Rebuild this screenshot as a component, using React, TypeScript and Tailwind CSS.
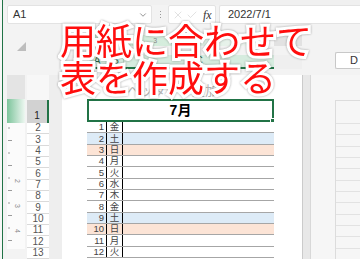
import { Check, ChevronDown, X } from 'lucide-react';

const days: [string, string, string][] = [
    ['1', '金', ''],
    ['2', '土', 'blue'],
    ['3', '日', 'orange'],
    ['4', '月', ''],
    ['5', '火', ''],
    ['6', '水', ''],
    ['7', '木', ''],
    ['8', '金', ''],
    ['9', '土', 'blue'],
    ['10', '日', 'orange'],
    ['11', '月', ''],
    ['12', '火', ''],
];

const rowBg: Record<string, string> = {
    blue: 'bg-[#ddebf7]',
    orange: 'bg-[#fce4d6]',
    '': 'bg-white',
};

function VerticalRuler() {
    // cm ticks down the left side of the page
    const marks = Array.from({ length: 12 }, (_, i) => i);
    return (
        <svg width="18" height="174" className="block">
            <rect x="0" y="0" width="18" height="24" fill="#e4e4e4" />
            <defs>
                <linearGradient id="rowSel" x1="0" x2="1" y1="0" y2="0">
                    <stop offset="0" stopColor="#7cc49b" />
                    <stop offset="1" stopColor="#eef7f1" />
                </linearGradient>
            </defs>
            <rect x="0" y="24" width="18" height="24" fill="url(#rowSel)" />
            <rect x="0" y="48" width="18" height="126" fill="#fbfbfb" />
            {marks.map((i) => (
                <line key={i} x1="1" x2={i % 2 ? 5 : 3} y1={53 + i * 12.5} y2={53 + i * 12.5} stroke="#9a9a9a" strokeWidth="1" />
            ))}
            {[2, 3, 4].map((n, i) => (
                <text key={n} x="8" y={104 + i * 25} fontSize="7" fill="#8a8a8a" fontFamily="Liberation Sans" transform={`rotate(90 8 ${104 + i * 25})`}>
                    {n}
                </text>
            ))}
        </svg>
    );
}

export default function App() {
    return (
        <div className="relative h-[259px] w-[360px] overflow-hidden bg-[#f3f3f3] font-['Liberation_Sans','Noto_Sans_CJK_JP',sans-serif] text-[#333]">
            <div className="flex h-full">
                <div className="w-[2px] bg-[#f7f7f7]" />
                <div className="w-px bg-[#217346]" />

                <div className="flex min-w-0 flex-1 flex-col">
                    {/* ribbon edge */}
                    <div className="h-[6px] bg-[#f0f0f0]" />

                    {/* formula bar */}
                    <div className="flex h-[19px] items-stretch">
                        <div className="ml-[4px] flex w-[145px] items-center justify-between rounded-[2px] border border-[#e3e3e3] bg-white pl-[5px] pr-[3px]">
                            <span className="text-[11px]">A1</span>
                            <ChevronDown size={10} strokeWidth={1.5} className="text-[#555]" />
                        </div>
                        <div className="flex w-[16px] flex-col items-center justify-center gap-[2px]">
                            <span className="h-[1px] w-[1px] bg-[#9a9a9a]" />
                            <span className="h-[1px] w-[1px] bg-[#9a9a9a]" />
                            <span className="h-[1px] w-[1px] bg-[#9a9a9a]" />
                        </div>
                        <div className="flex w-[48px] items-center gap-[2px] rounded-[2px] border border-[#e3e3e3] bg-white pl-[3px]">
                            <X size={12} strokeWidth={1} className="text-[#c4c4c4]" />
                            <Check size={12} strokeWidth={1} className="text-[#c4c4c4]" />
                            <span className="ml-[3px] font-['Liberation_Serif',serif] text-[12px] italic text-[#333]">fx</span>
                        </div>
                        <div className="ml-[3px] flex flex-1 items-center rounded-l-[2px] border border-r-0 border-[#e3e3e3] bg-white pl-[8px] text-[11px]">
                            2022/7/1
                        </div>
                    </div>

                    {/* rulers and column headers */}
                    <div className="flex h-[60px]">
                        <div className="w-[59px] pl-[14px] pt-[18px]">
                            <div className="h-0 w-0 border-b-[9px] border-l-[9px] border-b-[#bdbdbd] border-l-transparent" />
                        </div>
                        <div className="flex w-[240px] flex-col pt-[11px]">
                            <div className="flex h-[11px] bg-[#e2e2e2]">
                                <div className="w-[25px]" />
                                <div className="flex w-[187px] bg-gradient-to-r from-[#c9e7d4] via-[#d8eedf] to-[#f6f6f6] pl-[46px] text-[7px] leading-[11px] text-[#8a8a8a]">
                                    {['2', '3', '4', '5', '6', '7', '8'].map((n) => (
                                        <span key={n} className="w-[25.5px]">{n}</span>
                                    ))}
                                </div>
                            </div>
                            <div className="mt-[9px] flex h-[14px] bg-[#efefef]">
                                <div className="w-[25px]" />
                                <div className="flex w-[187px] border-b-2 border-[#217346] bg-[#d6ecdf] text-[10px] leading-[12px] text-[#2a5e3f]">
                                    <span className="w-[20px] text-center">A</span>
                                    <span className="w-[16px] border-l border-[#b5cfbf] text-center">B</span>
                                    <span className="flex-1 border-l border-[#b5cfbf] text-center">C</span>
                                </div>
                            </div>
                        </div>
                        <div className="flex-1 pl-[33px] pt-[28px]">
                            <div className="flex h-[17px] items-center rounded-l-[2px] border border-r-0 border-[#c8c8c8] bg-white pl-[14px] text-[11px]">
                                D
                            </div>
                        </div>
                    </div>

                    {/* sheet body */}
                    <div className="flex flex-1">
                        <div className="w-[4px]" />
                        <VerticalRuler />
                        <div className="w-[2px]" />

                        {/* row headers */}
                        <div className="flex w-[22px] flex-col bg-[#f7f7f7]">
                            <div className="h-[25px]" />
                            <div className="flex h-[23px] items-end justify-center border-r-2 border-[#217346] bg-[#d2d2d2] pb-[2px] text-[10px] leading-none text-[#222]">
                                1
                            </div>
                            {days.map(([d]) => (
                                <div key={d} className="flex h-[11.34px] shrink-0 items-center justify-center border-b border-[#dadada] bg-white text-[10px] leading-none text-[#555]">
                                    {Number(d) + 1}
                                </div>
                            ))}
                        </div>

                        <div className="w-[13px] bg-[#eeeeee]" />

                        {/* page */}
                        <div className="flex w-[240px] flex-col bg-white pl-[25px]">
                            <div className="h-[24px] pl-[40px] pt-[9px] text-[13px] leading-none text-[#b3b3b3]">
                                ヘッダーの追加
                            </div>
                            <div className="relative flex h-[23px] w-[187px] items-center justify-center border-2 border-[#217346] text-[14px] font-bold text-black">
                                7月
                                <span className="absolute -bottom-[3px] -right-[3px] h-[5px] w-[5px] border border-white bg-[#217346]" />
                            </div>
                            {days.map(([d, w, c]) => (
                                <div key={d} className={`flex h-[11.34px] w-[187px] shrink-0 border-b border-[#a6a6a6] text-[9.5px] leading-none text-[#444] ${rowBg[c]}`}>
                                    <span className="flex w-[19px] items-center justify-end pr-[2px]">{d}</span>
                                    <span className="flex w-[17px] items-center justify-center border-x border-black text-[9.5px]">{w}</span>
                                    <span className="flex-1" />
                                </div>
                            ))}
                        </div>

                        {/* page gap */}
                        <div className="w-[8px] border-l border-[#cbcbcb] bg-[#e8e8e8]" />

                        {/* next page, greyed out */}
                        <div className="flex flex-1 flex-col border-l border-[#d8d8d8] bg-[#f6f6f6] pl-[24px]">
                            <div className="h-[25px]" />
                            <div className="flex flex-1 flex-col border-l border-t border-[#dcdcdc]">
                                <div className="h-[22px]" />
                                {days.map(([d]) => (
                                    <div key={d} className="h-[11.34px] shrink-0 border-t border-[#e2e2e2]" />
                                ))}
                            </div>
                        </div>
                    </div>
                </div>
            </div>

            {/* big caption over the sheet */}
            <div className="absolute left-[60px] top-[21px] z-10 font-['Noto_Sans_CJK_JP',sans-serif] text-[36px] font-normal leading-[37px] text-[#ff0d0d] [-webkit-text-stroke:6px_#ffffff] [filter:drop-shadow(0_0_1px_rgba(0,0,0,0.35))] [paint-order:stroke_fill]">
                <div>用紙に合わせて</div>
                <div>表を作成する</div>
            </div>
        </div>
    );
}
